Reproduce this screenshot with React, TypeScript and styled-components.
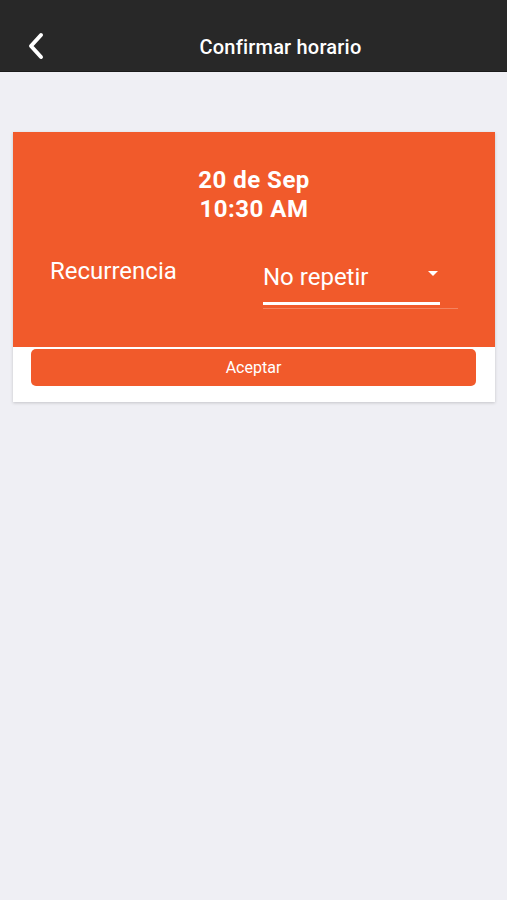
import styled, { createGlobalStyle } from 'styled-components'

const GlobalStyle = createGlobalStyle`
    html, body {
        margin:0;
        padding:0;
        background-color:#efeff4;
        font-family: Roboto, "Liberation Sans", sans-serif;
    }
`

const Page = styled.div`
    min-height:900px;
    background-color:#efeff4;
`

const Header = styled.header`
    height:72px;
    box-sizing:border-box;
    padding-top:20px;
    background-color:#282828;
    border-bottom:1px solid #1a1a1a;
    display:flex;
    align-items:center;
`

const BackButton = styled.button`
    width:54px;
    height:52px;
    padding:0 0 0 28px;
    border:none;
    background:none;
    display:flex;
    align-items:center;
    cursor:pointer;
`

const Title = styled.h1`
    flex:1;
    margin:0;
    text-align:center;
    color:#fff;
    font-size:20px;
    font-weight:500;
    letter-spacing:0.2px;
    padding-top:2px;
`

const Content = styled.main`
    padding:60px 12px 0 13px;
`

const Card = styled.div`
    background-color:#fff;
    box-shadow:0 1px 3px rgba(0,0,0,0.18);
    padding-bottom:16px;
`

const Top = styled.div`
    background-color:#f15a2b;
    height:215px;
    box-sizing:border-box;
    padding-top:34px;
`

const DateText = styled.div`
    color:#fff;
    text-align:center;
    font-size:24px;
    font-weight:700;
    letter-spacing:0.5px;
    line-height:29px;
`

const Row = styled.div`
    display:flex;
    align-items:flex-start;
    margin-top:31px;
    padding-left:37px;
`

const Label = styled.span`
    width:213px;
    color:#fff;
    font-size:24px;
    line-height:32px;
`

const Select = styled.div`
    width:195px;
    border-bottom:1px solid rgba(255,255,255,0.25);
    padding-bottom:3px;
`

const SelectInner = styled.div`
    width:177px;
    height:50px;
    box-sizing:border-box;
    padding-top:6px;
    border-bottom:3px solid #fff;
    display:flex;
    justify-content:space-between;
    align-items:flex-start;
    color:#fff;
    font-size:24px;
    line-height:32px;
`

const Caret = styled.span`
    margin:10px 2px 0 0;
    width:0;
    height:0;
    border-left:5px solid transparent;
    border-right:5px solid transparent;
    border-top:5px solid #fff;
`

const AcceptButton = styled.button`
    display:block;
    margin:2px 19px 0 18px;
    width:calc(100% - 37px);
    height:37px;
    border:none;
    border-radius:5px;
    background-color:#f15a2b;
    color:#fff;
    font-family: Roboto, "Liberation Sans", sans-serif;
    font-size:16px;
    cursor:pointer;
`

export default function App() {
    return <>
        <GlobalStyle />
        <Page>
            <Header>
                <BackButton aria-label="Volver">
                    <svg width="16" height="28" viewBox="0 0 16 28">
                        <path d="M13 3 L3 14 L13 25" fill="none" stroke="#fff" strokeWidth="4" strokeLinecap="round" strokeLinejoin="round" />
                    </svg>
                </BackButton>
                <Title>Confirmar horario</Title>
            </Header>

            <Content>
                <Card>
                    <Top>
                        <DateText>20 de Sep</DateText>
                        <DateText>10:30 AM</DateText>
                        <Row>
                            <Label>Recurrencia</Label>
                            <Select>
                                <SelectInner>
                                    No repetir
                                    <Caret />
                                </SelectInner>
                            </Select>
                        </Row>
                    </Top>
                    <AcceptButton>Aceptar</AcceptButton>
                </Card>
            </Content>
        </Page>
    </>
}
